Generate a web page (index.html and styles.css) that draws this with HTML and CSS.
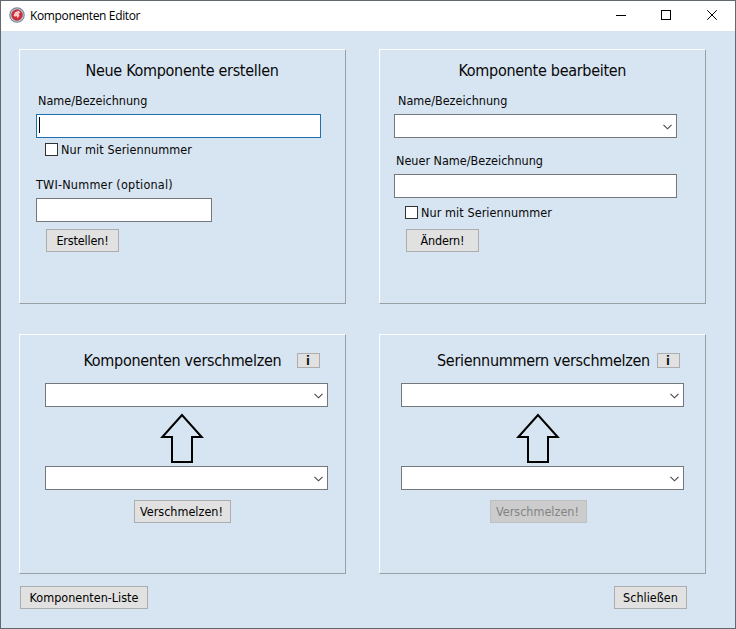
FILE: index.html
```
<!DOCTYPE html>
<html lang="de">
<head>
<meta charset="utf-8">
<title>Komponenten Editor</title>
<link rel="stylesheet" href="styles.css">
</head>
<body>
<svg width="0" height="0" class="defs" aria-hidden="true">
  <symbol id="chevron" viewBox="0 0 9 6"><path d="M.5 .8 4.5 4.8 8.5 .8" fill="none" stroke="#444" stroke-width="1.1"/></symbol>
  <symbol id="arrow" viewBox="0 0 44 51"><path d="M22 2 2.3 24H12v25h20V24h9.700Z" fill="none" stroke="#000" stroke-width="2"/></symbol>
</svg>
<div class="window">
  <header class="titlebar">
    <svg class="logo" width="16" height="16" viewBox="0 0 16 16">
      <circle cx="8" cy="8" r="7.2" fill="#d4dae3" stroke="#7d8798" stroke-width="1.2"/>
      <circle cx="8" cy="8" r="5.500" fill="#d42a35" stroke="#8a5260" stroke-width=".6"/>
      <path d="M4.500 8.500 6 5.200l3.500-1.400 2 1.700-2 1.200 1 1.800-1.800 2.700-1.200-2.200-1.500.8Z" fill="#f3cdd0"/>
    </svg>
    <span class="caption">Komponenten Editor</span>
    <svg class="controls" width="103" height="12" viewBox="0 0 103 12" fill="none" stroke="#000">
      <path d="M0 6.500h10" />
      <rect x="45.500" y="1.500" width="9" height="9"/>
      <path d="M91.200 1.200l9.600 9.600M100.800 1.200l-9.600 9.600"/>
    </svg>
  </header>
  <main class="panels">
    <section class="panel create">
      <h2>Neue Komponente erstellen</h2>
      <label class="name">Name/Bezeichnung</label>
      <div class="field focused"><i class="caret"></i></div>
      <label class="check"><i class="box"></i><span>Nur mit Seriennummer</span></label>
      <label class="twi">TWI-Nummer (optional)</label>
      <div class="field short"></div>
      <button class="btn small"><span>Erstellen!</span></button>
    </section>
    <section class="panel edit">
      <h2>Komponente bearbeiten</h2>
      <label class="name">Name/Bezeichnung</label>
      <div class="field"><svg class="chev"><use href="#chevron"/></svg></div>
      <label class="newname">Neuer Name/Bezeichnung</label>
      <div class="field"></div>
      <label class="check"><i class="box"></i><span>Nur mit Seriennummer</span></label>
      <button class="btn small"><span>Ändern!</span></button>
    </section>
    <section class="panel merge">
      <div class="head"><h2>Komponenten verschmelzen</h2><button class="info">i</button></div>
      <div class="field"><svg class="chev"><use href="#chevron"/></svg></div>
      <svg class="arrow"><use href="#arrow"/></svg>
      <div class="field"><svg class="chev"><use href="#chevron"/></svg></div>
      <button class="btn mergebtn"><span>Verschmelzen!</span></button>
    </section>
    <section class="panel merge serial">
      <div class="head"><h2>Seriennummern verschmelzen</h2><button class="info">i</button></div>
      <div class="field"><svg class="chev"><use href="#chevron"/></svg></div>
      <svg class="arrow"><use href="#arrow"/></svg>
      <div class="field"><svg class="chev"><use href="#chevron"/></svg></div>
      <button class="btn mergebtn" disabled><span>Verschmelzen!</span></button>
    </section>
  </main>
  <footer class="footer">
    <button class="btn list"><span>Komponenten-Liste</span></button>
    <button class="btn close"><span>Schließen</span></button>
  </footer>
</div>
</body>
</html>
```
FILE: styles.css
```
* { box-sizing: border-box; }
body {
  margin: 0;
  font: 12.5px/16px "DejaVu Sans Condensed", "DejaVu Sans", sans-serif;
  color: #080808;
  overflow: hidden;
}
.defs { position: absolute; }
.window {
  width: 736px;
  height: 629px;
  border: 1px solid #626a70;
  background: #d7e4f1;
  display: flex;
  flex-direction: column;
}
.titlebar {
  height: 30px;
  background: #fff;
  display: flex;
  align-items: center;
  padding: 0 16px 2px 8px;
  flex: none;
}
.caption {
  margin: 2px 0 0 5px;
  font: 12px/16px "Open Sans", sans-serif;
  letter-spacing: -.36px;
  color: #000;
}
.controls { margin-left: auto; }
.panels {
  display: grid;
  grid-template: 255px 240px / 327px 327px;
  gap: 30px 33px;
  padding: 18px 0 0 18px;
}
.panel {
  border: 1px solid;
  border-color: #fff #9aa1a6 #9aa1a6 #fff;
  display: flex;
  flex-direction: column;
  align-items: flex-start;
}
h2 {
  margin: 0;
  font-size: 16px;
  line-height: 20px;
  font-weight: normal;
  letter-spacing: -.3px;
  white-space: nowrap;
}
.create, .edit { padding: 11px 0 0 16px; }
.create h2 { margin-left: 49.5px; }
.edit { padding-left: 14px; }
.edit h2 { margin-left: 64.5px; }
.create .name { margin: 12px 0 5px 2px; }
.edit .name { margin: 12px 0 5px 4px; }
.newname { margin: 15px 0 5px 2px; }
.twi { margin: 19px 0 5px; letter-spacing: .22px; }
.field {
  width: 283px;
  height: 24px;
  flex: none;
  background: #fff;
  border: 1px solid #73787c;
  display: flex;
  align-items: center;
  justify-content: flex-end;
}
.focused { width: 285px; border-color: #2070b0; justify-content: flex-start; }
.short { width: 176px; }
.caret { width: 1px; height: 16px; margin: 0 0 2px 2px; background: #000; }
.chev { width: 9px; height: 6px; margin: 2px 4px 0 0; }
.check { display: flex; align-items: center; height: 16px; letter-spacing: .08px; }
.create .check { margin: 4px 0 0 9px; }
.edit .check { margin: 7px 0 0 11px; }
.box { width: 13px; height: 13px; background: #fff; border: 1px solid #333; margin: -1px 3px 0 0; }
.btn {
  height: 23px;
  padding: 0;
  flex: none;
  border: 1px solid #adadad;
  background: #e1e1e1;
  color: #000;
  font: inherit;
  text-align: center;
}
.small { width: 73px; letter-spacing: -.15px; }
.create .small { margin: 7px 0 0 10px; }
.edit .small { margin: 8px 0 0 12px; }
.merge { padding: 16px 0 0 25px; }
.serial { padding-left: 21px; }
.head { display: flex; width: 275px; height: 20px; margin-bottom: 12px; justify-content: space-between; padding-left: 38.500px; }
.serial .head { width: 279px; padding-left: 36px; }
.info {
  width: 23px;
  height: 15px;
  margin-top: 2px;
  padding: 1px 1px 0 0;
  border: 1px solid #adadad;
  background: #e1e1e1;
  font: bold 12.5px/12px "DejaVu Sans Condensed", sans-serif;
  color: #111;
}
.arrow { width: 44px; height: 51px; margin: 6px 0 2px 115px; }
.mergebtn { width: 97px; margin: 10px 0 0 89px; }
.mergebtn span { margin-right: 2px; }
.btn:disabled { background: #ccc; border-color: #bfbfbf; color: #838383; }
.footer { display: flex; justify-content: space-between; padding: 12px 48px 0 19px; }
.list { width: 128px; }
.close { width: 73px; }
```
